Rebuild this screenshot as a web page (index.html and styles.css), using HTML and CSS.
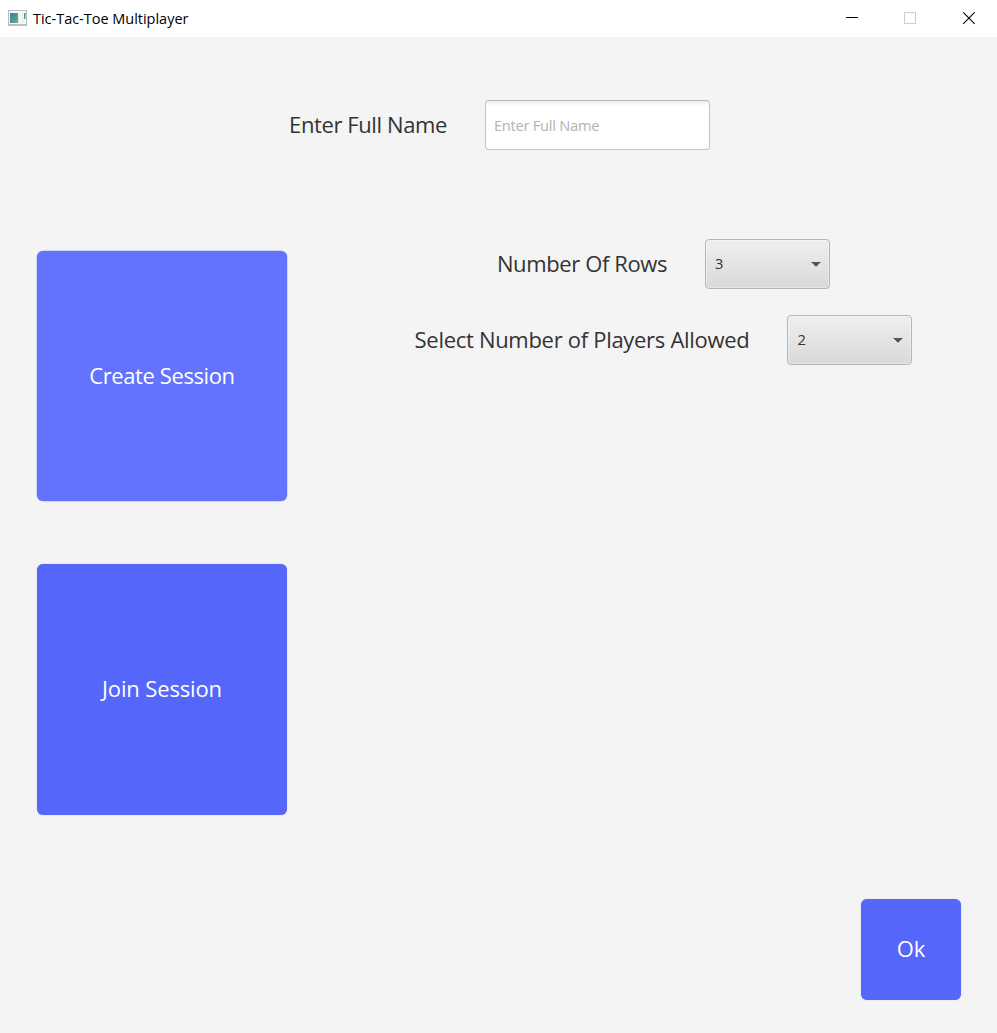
FILE: index.html
```html
<!DOCTYPE html>
<html lang="en">
<head>
<meta charset="utf-8">
<title>Tic-Tac-Toe Multiplayer</title>
<link rel="stylesheet" href="styles.css">
</head>
<body>
<div class="window">
  <header class="titlebar">
    <svg class="app-icon" width="19" height="16" viewBox="0 0 19 16">
      <defs><linearGradient id="pane" x1="0" y1="0" x2="1" y2="1"><stop offset="0" stop-color="#3f78a0"/><stop offset="1" stop-color="#5dbb78"/></linearGradient></defs>
      <rect x=".5" y=".5" width="18" height="14.500" fill="#f6f7f9" stroke="#b8bbc0"/>
      <path d="M0 15H19" stroke="#a0a4aa"/>
      <rect x="2" y="3" width="8" height="10" fill="url(#pane)"/>
      <path d="M10.500 3V13M14.500 3V13" stroke="#e4e7ec"/>
      <rect x="16" y="3" width="1.500" height="6" fill="url(#pane)"/>
    </svg>
    <h1 class="title">Tic-Tac-Toe Multiplayer</h1>
    <svg class="controls" width="125" height="14" viewBox="0 0 125 14">
      <path d="M0 5.500H12" stroke="#000"/>
      <rect x="58.500" y=".5" width="11" height="11" fill="none" stroke="#ccc"/>
      <path d="M117.200 .3L128.700 11.800M128.700 .3L117.200 11.800" stroke="#000" stroke-width="1.100"/>
    </svg>
  </header>
  <main class="content">
    <div class="row name-row">
      <label class="label label-name" for="name">Enter Full Name</label>
      <input class="field" id="name" type="text" placeholder="Enter Full Name">
    </div>
    <div class="middle">
      <div class="sessions">
        <button class="tile tile-create">Create Session</button>
        <button class="tile tile-join">Join Session</button>
      </div>
      <div class="options">
        <div class="row">
          <span class="label label-rows">Number Of Rows</span>
          <div class="combo"><span class="value">3</span><svg class="arrow" width="10" height="6" viewBox="0 0 10 6"><path d="M0 1H10L5 6Z" fill="#fff"/><path d="M0 0H10L5 5Z" fill="#555"/></svg></div>
        </div>
        <div class="row">
          <span class="label label-players">Select Number of Players Allowed</span>
          <div class="combo"><span class="value">2</span><svg class="arrow" width="10" height="6" viewBox="0 0 10 6"><path d="M0 1H10L5 6Z" fill="#fff"/><path d="M0 0H10L5 5Z" fill="#555"/></svg></div>
        </div>
      </div>
    </div>
    <footer class="actions"><button class="tile tile-ok">Ok</button></footer>
  </main>
</div>
</body>
</html>
```
FILE: styles.css
```css
* { box-sizing: border-box; }
body { margin: 0; background: #f4f4f4; font-family: "Open Sans", "Noto Sans", sans-serif; color: #333; }
.window { width: 997px; height: 1033px; display: flex; flex-direction: column; overflow: hidden; }
.titlebar { height: 37px; flex: none; background: #fff; display: flex; align-items: flex-start; padding: 0 26px 0 8px; }
.app-icon { margin-top: 10px; }
.title { margin: 0 auto 0 6px; font-size: 14.500px; line-height: 37px; font-weight: 400; letter-spacing: -.02px; color: #000; white-space: nowrap; }
.controls { margin-top: 12px; overflow: visible; }
.content { flex: 1; display: flex; flex-direction: column; padding: 63px 36px 33px 37px; }
.row { display: flex; align-items: center; justify-content: center; gap: 38px; }
.name-row { padding-left: 1px; }
.label { padding-bottom: 2px; font-size: 22px; line-height: 30px; white-space: nowrap; }
.label-name { letter-spacing: -.4px; }
.label-rows { letter-spacing: -.38px; }
.label-players { letter-spacing: -.3px; }
.field { width: 225px; height: 50px; padding: 0 8px; border: 1px solid #c4c4c4; border-top-color: #b5b5b5; border-radius: 4px; background: linear-gradient(#eee, #fff 5px); font: 14.700px "Open Sans", sans-serif; letter-spacing: -.27px; color: #333; outline: none; }
.field::placeholder { color: #b3b3b3; opacity: 1; }
.middle { display: flex; margin-top: 89px; }
.sessions { display: flex; flex-direction: column; gap: 62px; padding-top: 12px; }
.tile { width: 250px; height: 251px; padding: 0 0 4px; border: 0; border-radius: 6px; background: #5566fa; box-shadow: 0 0 1px #8b97f6; color: #fff; font: 22px/30px "Open Sans", sans-serif; white-space: nowrap; }
.tile-create { height: 250px; margin-bottom: 1px; padding-bottom: 2px; background: #6373fd; box-shadow: 0 0 0 .5px #aab3fa; letter-spacing: -.4px; }
.tile-join { letter-spacing: -.15px; }
.options { flex: 1; display: flex; flex-direction: column; gap: 26px; padding-left: 79px; }
.combo { width: 125px; height: 50px; padding: 0 8px 0 9px; display: flex; align-items: center; justify-content: space-between; border: 1px solid #b5b5b5; border-radius: 4px; background: linear-gradient(#efefef, #d9d9d9); box-shadow: inset 0 0 0 1px rgba(255,255,255,.4); font-size: 14.700px; }
.value { padding-bottom: 2px; }
.arrow { margin-top: 2px; }
.actions { margin-top: auto; display: flex; justify-content: flex-end; }
.tile-ok { width: 100px; height: 101px; }
```
